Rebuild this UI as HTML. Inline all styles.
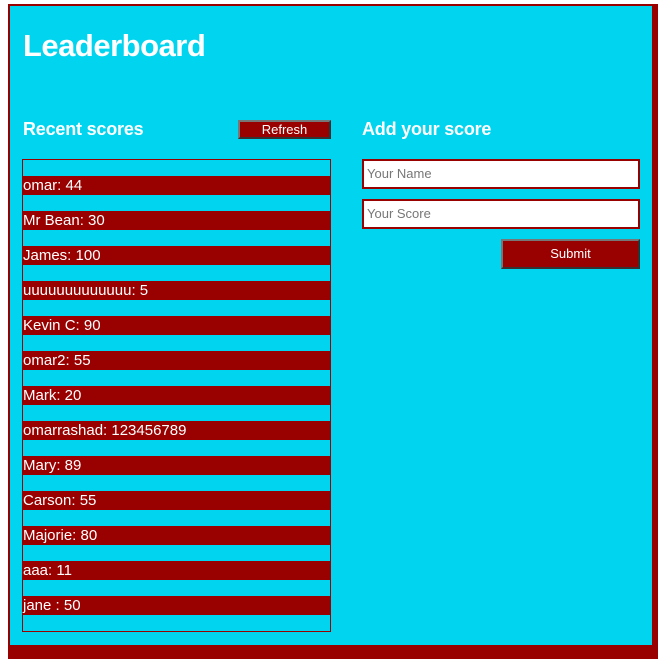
<!DOCTYPE html>
<html><head><style>
body{margin:0;background:#fff;width:665px;height:666px;position:relative;overflow:hidden;font-family:"Liberation Sans",sans-serif;}
.box{position:absolute;left:8px;top:4px;width:642px;height:639px;background:#00d4ef;border-style:solid;border-color:#990000;border-width:2px 6px 14px 2px;}
h1{position:absolute;left:23px;top:28px;margin:0;font-size:31px;font-weight:bold;color:#fff;letter-spacing:-0.5px;}
.h2{position:absolute;margin:0;font-size:18px;font-weight:bold;color:#fff;letter-spacing:-0.2px;}
.btn{position:absolute;background:#990000;color:#fff;font-size:13px;text-align:center;box-sizing:border-box;border:2px solid;border-color:#777 #333 #333 #777;}
.list{position:absolute;left:22px;top:159px;width:307px;height:471px;border:1px solid #990000;}
.row{position:absolute;left:0;width:307px;height:19px;background:#990000;color:#fff;font-size:15px;line-height:19px;white-space:nowrap;}
.inp{position:absolute;left:362px;width:278px;height:30px;box-sizing:border-box;background:#fff;border:2px solid #990000;color:#777;font-size:13px;line-height:26px;padding-left:3px;}
</style></head><body>
<div class="box"></div>
<h1>Leaderboard</h1>
<div class="h2" style="left:23px;top:119px">Recent scores</div>
<div class="btn" style="left:238px;top:120px;width:93px;height:19px;line-height:15px">Refresh</div>
<div class="list">
<div class="row" style="top:16px">omar: 44</div>
<div class="row" style="top:51px">Mr Bean: 30</div>
<div class="row" style="top:86px">James: 100</div>
<div class="row" style="top:121px">uuuuuuuuuuuuu: 5</div>
<div class="row" style="top:156px">Kevin C: 90</div>
<div class="row" style="top:191px">omar2: 55</div>
<div class="row" style="top:226px">Mark: 20</div>
<div class="row" style="top:261px">omarrashad: 123456789</div>
<div class="row" style="top:296px">Mary: 89</div>
<div class="row" style="top:331px">Carson: 55</div>
<div class="row" style="top:366px">Majorie: 80</div>
<div class="row" style="top:401px">aaa: 11</div>
<div class="row" style="top:436px">jane : 50</div>
</div>
<div class="h2" style="left:362px;top:119px">Add your score</div>
<div class="inp" style="top:159px">Your Name</div>
<div class="inp" style="top:199px">Your Score</div>
<div class="btn" style="left:501px;top:239px;width:139px;height:30px;line-height:26px">Submit</div>
</body></html>
